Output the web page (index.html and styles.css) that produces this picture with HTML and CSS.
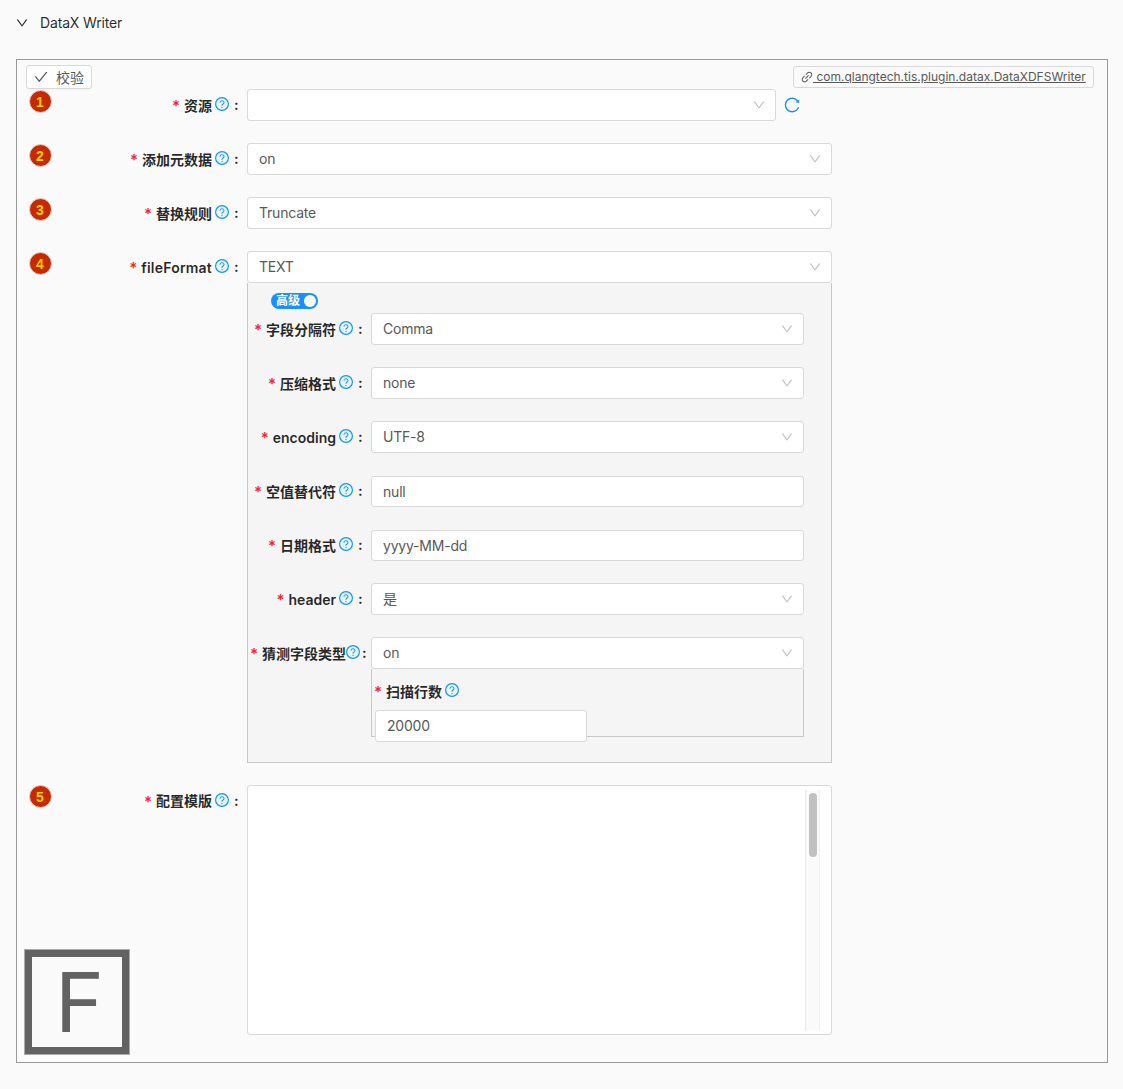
FILE: index.html
```
<!DOCTYPE html>
<html lang="zh-CN">
<head>
<meta charset="utf-8">
<title>DataX Writer</title>
<link rel="stylesheet" href="styles.css">
</head>
<body>
<svg class="sprite" aria-hidden="true">
  <symbol id="down" viewBox="0 0 1024 1024"><path d="M884 256h-75c-5.1 0-9.9 2.5-12.9 6.6L512 654.2 227.9 262.6c-3-4.1-7.8-6.6-12.9-6.6h-75c-6.5 0-10.3 7.4-6.5 12.7l352.6 486.1c12.8 17.6 39 17.6 51.7 0l352.6-486.1c3.9-5.3.1-12.7-6.4-12.7z"/></symbol>
  <symbol id="check" viewBox="0 0 1024 1024"><path d="M912 190h-69.9c-9.8 0-19.1 4.5-25.1 12.2L404.7 724.5 207 474a32 32 0 00-25.1-12.2H112c-6.7 0-10.4 7.7-6.3 12.9l273.9 347c12.8 16.2 37.4 16.2 50.3 0l488.4-618.9c4.1-5.1.4-12.8-6.3-12.8z"/></symbol>
  <symbol id="link" viewBox="0 0 1024 1024"><path d="M574 665.4a8.03 8.03 0 00-11.3 0L446.5 781.6c-53.8 53.8-144.6 59.5-204 0-59.5-59.5-53.8-150.2 0-204l116.2-116.2c3.1-3.1 3.1-8.2 0-11.3l-39.8-39.8a8.03 8.03 0 00-11.3 0L191.4 526.5c-84.6 84.6-84.6 221.5 0 306s221.5 84.6 306 0l116.2-116.2c3.1-3.1 3.1-8.2 0-11.3L574 665.4zm258.6-474c-84.6-84.6-221.5-84.6-306 0L410.3 307.6a8.03 8.03 0 000 11.3l39.7 39.7c3.1 3.1 8.2 3.1 11.3 0l116.2-116.2c53.8-53.8 144.6-59.5 204 0 59.5 59.5 53.8 150.2 0 204L665.3 562.6a8.03 8.03 0 000 11.3l39.8 39.8c3.1 3.1 8.2 3.1 11.3 0l116.2-116.2c84.5-84.6 84.5-221.5 0-306.1zM610.1 372.3a8.03 8.03 0 00-11.3 0L372.3 598.7a8.03 8.03 0 000 11.3l39.6 39.6c3.1 3.1 8.2 3.1 11.3 0l226.4-226.4c3.1-3.1 3.1-8.2 0-11.3l-39.5-39.6z"/></symbol>
  <symbol id="reload" viewBox="0 0 1024 1024"><path d="M909.1 209.3l-56.4 44.1C775.8 155.1 656.2 92 521.9 92 290 92 102.3 279.5 102 511.5 101.7 743.7 289.8 932 521.9 932c181.3 0 335.8-115 394.6-276.1 1.5-4.2-.7-8.9-4.9-10.3l-56.7-19.5a8 8 0 00-10.1 4.8c-1.8 5-3.8 10-5.9 14.9-17.3 41-42.1 77.8-73.7 109.4A344.77 344.77 0 01655.9 829c-42.3 17.9-87.4 27-133.8 27-46.5 0-91.5-9.1-133.8-27A341.5 341.5 0 01279 755.2a342.16 342.16 0 01-73.7-109.4c-17.9-42.4-27-87.4-27-133.9s9.1-91.5 27-133.9c17.3-41 42.1-77.8 73.7-109.4 31.6-31.6 68.4-56.4 109.3-73.8 42.3-17.9 87.4-27 133.8-27 46.5 0 91.5 9.1 133.8 27a341.5 341.5 0 01109.3 73.8c9.9 9.9 19.2 20.4 27.8 31.4l-60.2 47a8 8 0 003 14.1l175.6 43c5 1.2 9.9-2.6 9.9-7.7l.8-180.9c-.1-6.6-7.8-10.3-13-6.2z"/></symbol>
  <symbol id="help" viewBox="64 64 896 896"><circle cx="512" cy="512" r="410" fill="#e6f7ff" stroke="#1890ff" stroke-width="76"/><path fill="#1890ff" d="M623.6 316.7C593.6 290.4 554 276 512 276s-81.6 14.5-111.6 40.7C369.2 344 352 380.7 352 420v7.6c0 4.4 3.6 8 8 8h48c4.4 0 8-3.6 8-8V420c0-44.1 43.1-80 96-80s96 35.9 96 80c0 31.1-22 59.6-56.1 72.7-21.2 8.1-39.2 22.3-52.1 40.9-13.1 19-19.9 41.8-19.9 64.9V620c0 4.4 3.6 8 8 8h48c4.4 0 8-3.6 8-8v-22.7a48.3 48.3 0 0130.9-44.8c59-22.7 97.1-74.7 97.1-132.5.1-39.3-17.1-76-48.3-103.3zM472 732a40 40 0 1080 0 40 40 0 10-80 0z"/></symbol>
</svg>

<header class="section-head"><svg class="head-arrow"><use href="#down"/></svg><span>DataX Writer</span></header>

<main class="panel">
  <div class="toolbar">
    <button class="verify"><svg class="verify-icon"><use href="#check"/></svg><span>校验</span></button>
    <a class="plugin-tag"><svg class="tag-icon"><use href="#link"/></svg><span class="tag-text">&nbsp;com.qlangtech.tis.plugin.datax.DataXDFSWriter</span></a>
  </div>

  <div class="row">
    <div class="label"><b class="badge">1</b><i class="star">*</i><span class="name">资源</span><svg class="help"><use href="#help"/></svg><span class="colon">:</span></div>
    <div class="control with-action"><div class="select"><span></span><svg class="arrow"><use href="#down"/></svg></div><svg class="reload"><use href="#reload"/></svg></div>
  </div>
  <div class="row">
    <div class="label"><b class="badge">2</b><i class="star">*</i><span class="name">添加元数据</span><svg class="help"><use href="#help"/></svg><span class="colon">:</span></div>
    <div class="control"><div class="select"><span>on</span><svg class="arrow"><use href="#down"/></svg></div></div>
  </div>
  <div class="row">
    <div class="label"><b class="badge">3</b><i class="star">*</i><span class="name">替换规则</span><svg class="help"><use href="#help"/></svg><span class="colon">:</span></div>
    <div class="control"><div class="select"><span>Truncate</span><svg class="arrow"><use href="#down"/></svg></div></div>
  </div>
  <div class="row">
    <div class="label"><b class="badge">4</b><i class="star">*</i><span class="name latin">fileFormat</span><svg class="help"><use href="#help"/></svg><span class="colon">:</span></div>
    <div class="control">
      <div class="select"><span>TEXT</span><svg class="arrow"><use href="#down"/></svg></div>
      <div class="sub">
        <div class="switch-line"><div class="switch"><span>高级</span><i class="knob"></i></div></div>
        <div class="sub-row">
          <div class="label"><i class="star">*</i><span class="name">字段分隔符</span><svg class="help"><use href="#help"/></svg><span class="colon">:</span></div>
          <div class="control"><div class="select"><span>Comma</span><svg class="arrow"><use href="#down"/></svg></div></div>
        </div>
        <div class="sub-row">
          <div class="label"><i class="star">*</i><span class="name">压缩格式</span><svg class="help"><use href="#help"/></svg><span class="colon">:</span></div>
          <div class="control"><div class="select"><span>none</span><svg class="arrow"><use href="#down"/></svg></div></div>
        </div>
        <div class="sub-row">
          <div class="label"><i class="star">*</i><span class="name">encoding</span><svg class="help"><use href="#help"/></svg><span class="colon">:</span></div>
          <div class="control"><div class="select"><span>UTF-8</span><svg class="arrow"><use href="#down"/></svg></div></div>
        </div>
        <div class="sub-row">
          <div class="label"><i class="star">*</i><span class="name">空值替代符</span><svg class="help"><use href="#help"/></svg><span class="colon">:</span></div>
          <div class="control"><div class="input">null</div></div>
        </div>
        <div class="sub-row">
          <div class="label"><i class="star">*</i><span class="name">日期格式</span><svg class="help"><use href="#help"/></svg><span class="colon">:</span></div>
          <div class="control"><div class="input">yyyy-MM-dd</div></div>
        </div>
        <div class="sub-row">
          <div class="label"><i class="star">*</i><span class="name">header</span><svg class="help"><use href="#help"/></svg><span class="colon">:</span></div>
          <div class="control"><div class="select"><span>是</span><svg class="arrow"><use href="#down"/></svg></div></div>
        </div>
        <div class="sub-row">
          <div class="label tight"><i class="star">*</i><span class="name">猜测字段类型</span><svg class="help"><use href="#help"/></svg><span class="colon">:</span></div>
          <div class="control">
            <div class="select"><span>on</span><svg class="arrow"><use href="#down"/></svg></div>
            <div class="nested">
              <div class="label nested-label"><i class="star">*</i><span class="name">扫描行数</span><svg class="help"><use href="#help"/></svg></div>
              <div class="select number">20000</div>
            </div>
          </div>
        </div>
      </div>
    </div>
  </div>
  <div class="row">
    <div class="label last"><b class="badge">5</b><i class="star">*</i><span class="name">配置模版</span><svg class="help"><use href="#help"/></svg><span class="colon">:</span></div>
    <div class="control"><div class="editor"><div class="track"><div class="thumb"></div></div></div></div>
  </div>
  <div class="mark">F</div>
</main>
</body>
</html>
```
FILE: styles.css
```
* { box-sizing: border-box; }
body {
  margin: 0;
  height: 1089px;
  background: #fafafa;
  color: rgba(0, 0, 0, .85);
  font: 14px/22px Inter, "Noto Sans CJK SC", sans-serif;
  overflow: hidden;
}
svg { display: block; flex: none; fill: currentColor; }
.sprite { position: absolute; width: 0; height: 0; }

.section-head {
  display: flex;
  align-items: center;
  gap: 11px;
  height: 59px;
  padding: 0 0 13px 15px;
  letter-spacing: -.15px;
}
.head-arrow { width: 14px; height: 14px; }

.panel {
  position: relative;
  width: 1092px;
  height: 1004px;
  margin-left: 16px;
  border: 1px solid #999;
}
.toolbar {
  display: flex;
  justify-content: space-between;
  align-items: flex-start;
  height: 29px;
  padding: 5px 13px 0 9px;
}
.verify {
  display: flex;
  align-items: center;
  gap: 7px;
  width: 66px;
  height: 24px;
  padding: 0 6px;
  border: 1px solid #d9d9d9;
  border-radius: 3px;
  background: #fff;
  color: #595959;
  font: inherit;
  white-space: nowrap;
  box-shadow: 0 2px 0 rgba(0, 0, 0, .015);
}
.verify span { padding-top: 1px; }
.verify-icon { width: 16px; height: 16px; }
.plugin-tag {
  display: flex;
  align-items: center;
  width: 301px;
  height: 22px;
  margin-top: 1px;
  padding: 0 6px;
  border: 1px solid #d9d9d9;
  border-radius: 3px;
  color: #595959;
  font-size: 12px;
  line-height: 20px;
  white-space: nowrap;
}
.tag-icon { width: 14px; height: 14px; margin-right: -1px; }
.tag-text { text-decoration: underline; }

.row { display: flex; margin-bottom: 22px; }
.row > .label { width: 230px; }
.row > .control { width: 585px; }
.label {
  position: relative;
  display: flex;
  flex: none;
  justify-content: flex-end;
  align-items: center;
  height: 32px;
  font-weight: 600;
  white-space: nowrap;
}
.star {
  width: 7px;
  margin: 0 5px 0 -1px;
  padding-top: 2px;
  color: #f5222d;
  font-size: 15px;
  font-style: normal;
}
.name { padding-top: 1px; }
.latin { letter-spacing: .2px; }
.help { width: 14px; height: 14px; margin: 0 5px 2px 3px; }
.colon { width: 5px; margin-right: 8px; font-weight: 700; }
.tight .help { margin: 0 2px 2px 0; }
.tight .colon { margin-right: 4px; }
.last .name { padding-top: 0; }
.last .badge { top: 0; }
.badge {
  position: absolute;
  left: 11.5px;
  top: .5px;
  width: 23px;
  height: 23px;
  border: 1.5px solid #ecd0ca;
  border-radius: 50%;
  background: #c42b03;
  color: #fc0;
  font: bold 14px/23px "Liberation Sans", sans-serif;
  text-align: center;
}

.select, .input {
  display: flex;
  align-items: center;
  justify-content: space-between;
  height: 32px;
  padding: 0 9px 0 11px;
  border: 1px solid #d9d9d9;
  border-radius: 3px;
  background: #fff;
  color: #595959;
  letter-spacing: -.2px;
}
.input { height: 31px; margin-top: 1px; }
.arrow { width: 14px; height: 14px; color: #bfbfbf; }
.with-action { display: flex; align-items: center; gap: 7px; }
.with-action .select { width: 529px; }
.reload { width: 18px; height: 18px; color: #1890ff; }

.sub {
  height: 480px;
  border: 1px solid #c8c8c8;
  border-top: 0;
  background: #f5f5f5;
}
.switch-line { height: 30px; padding: 10px 0 0 23px; }
.switch {
  display: flex;
  align-items: center;
  justify-content: space-between;
  width: 47px;
  height: 16px;
  padding: 0 2px 0 5px;
  border-radius: 8px;
  background: #1890ff;
  color: #fff;
  font-size: 12px;
  line-height: 16px;
  font-weight: 600;
}
.knob { width: 12px; height: 12px; border-radius: 50%; background: #fff; }
.sub-row { display: flex; height: 32px; margin-bottom: 22px; }
.sub-row > .label { width: 123px; }
.sub-row > .control { width: 433px; }
.nested {
  height: 68px;
  padding: 6px 0 0 3px;
  border: 1px solid #c8c8c8;
  border-top: 0;
}
.nested-label { justify-content: flex-start; height: 32px; }
.number { width: 212px; margin-top: 3px; }

.editor {
  display: flex;
  justify-content: flex-end;
  height: 250px;
  padding: 4px 11px;
  border: 1px solid #d9d9d9;
  border-radius: 3px;
  background: #fff;
}
.track {
  width: 15px;
  padding: 3px 2px 0 3px;
  border: solid #e8e8e8;
  border-width: 0 1px;
  border-right-color: #f0f0f0;
  background: #fafafa;
}
.thumb { width: 8px; height: 64px; border-radius: 4px; background: #c1c1c1; }

.mark {
  position: absolute;
  left: 7px;
  bottom: 7px;
  width: 106px;
  height: 106px;
  padding-left: 5px;
  border: 8px solid #626262;
  outline: 1px solid #aaa;
  outline-offset: -1px;
  color: #626262;
  font-size: 83px;
  line-height: 90px;
  text-align: center;
}
```
